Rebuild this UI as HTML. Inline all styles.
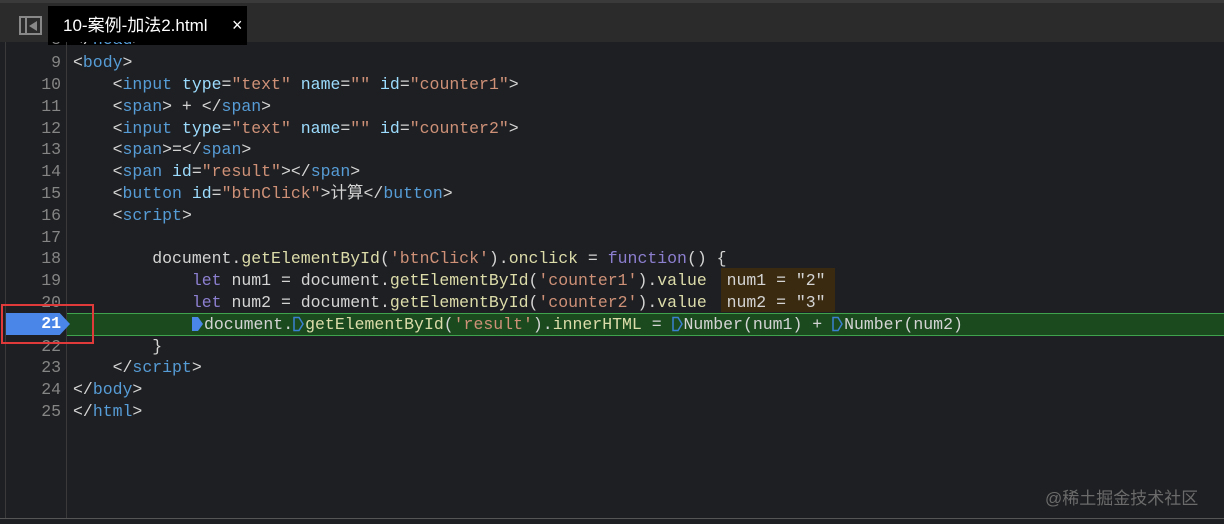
<!DOCTYPE html>
<html><head><meta charset="utf-8"><style>
*{margin:0;padding:0;box-sizing:border-box}
body{width:1224px;height:524px;background:#1e1f22;overflow:hidden;position:relative;font-family:"Liberation Mono","Noto Sans CJK SC",monospace;font-size:16.5px;color:#d4d4d4}
#tabbar{position:absolute;left:0;top:0;width:1224px;height:42px;background:#2b2b2b;border-top:3px solid #3a3a3a}
#tab{position:absolute;left:48px;top:3px;width:199px;height:39px;background:#000;color:#fff;font-family:"Liberation Sans","Noto Sans CJK SC",sans-serif;font-size:17px;line-height:39px;padding-left:15px}
#tab span{position:absolute;left:184px;top:0;font-size:18px}
#icon{position:absolute;left:19px;top:13px;width:23px;height:19px;border:2px solid #888}
#icon:before{content:"";position:absolute;left:4px;top:0;width:2px;height:15px;background:#888}
#icon:after{content:"";position:absolute;left:8px;top:3px;border-right:8px solid #888;border-top:5px solid transparent;border-bottom:5px solid transparent}
#leftstrip{position:absolute;left:5px;top:42px;width:1px;height:476px;background:#3a3a3a}
#gsep{position:absolute;left:66px;top:42px;width:1px;height:476px;background:#3a3a3a}
#code{position:absolute;left:0;top:42px;width:1224px;height:476px;overflow:hidden}
.l{position:absolute;left:0;height:21.8px;line-height:21.8px;white-space:pre;width:1224px}
.n{position:absolute;left:0;width:61px;text-align:right;color:#858585}
.c{position:absolute;left:73px}
.t{color:#569cd6}.a{color:#9cdcfe}.s{color:#ce9178}.f{color:#dcdcaa}.k{color:#8c7fd0}
#hl{position:absolute;left:67px;top:313px;width:1157px;height:23px;background:#1b4a1f;border-top:1px solid #3fa34d;border-bottom:1px solid #3fa34d}
#bp{position:absolute;left:6px;top:313px;width:64px;height:22px;background:#4a86e8;clip-path:polygon(0 0,84% 0,100% 50%,84% 100%,0 100%)}
#red{position:absolute;left:1px;top:304px;width:93px;height:40px;border:2px solid #e03a3a}
#inl{position:absolute;left:721px;top:268px;width:114px;height:44px;background:#3a2a10}
svg.m{display:inline-block;width:11px;height:16px;vertical-align:-3px;margin-right:1px}
#wm{position:absolute;left:1045px;top:484px;font-family:"Liberation Sans","Noto Sans CJK SC",sans-serif;font-size:17px;color:#6b6b6b}
#bot{position:absolute;left:0;top:518px;width:1224px;height:1px;background:#555}
</style></head><body>
<div id="tabbar"><div id="icon"></div><div id="tab">10-案例-加法2.html<span>×</span></div></div>
<div id="hl"></div>
<div id="inl"></div>
<div id="code">
<div class="l" style="top:-12.6px"><span class="n">8</span><span class="c">&lt;/<span class="t">head</span>&gt;</span></div>
<div class="l" style="top:10.2px"><span class="n">9</span><span class="c">&lt;<span class="t">body</span>&gt;</span></div>
<div class="l" style="top:32px"><span class="n">10</span><span class="c">    &lt;<span class="t">input</span> <span class="a">type</span>=<span class="s">"text"</span> <span class="a">name</span>=<span class="s">""</span> <span class="a">id</span>=<span class="s">"counter1"</span>&gt;</span></div>
<div class="l" style="top:53.8px"><span class="n">11</span><span class="c">    &lt;<span class="t">span</span>&gt; + &lt;/<span class="t">span</span>&gt;</span></div>
<div class="l" style="top:75.6px"><span class="n">12</span><span class="c">    &lt;<span class="t">input</span> <span class="a">type</span>=<span class="s">"text"</span> <span class="a">name</span>=<span class="s">""</span> <span class="a">id</span>=<span class="s">"counter2"</span>&gt;</span></div>
<div class="l" style="top:97.4px"><span class="n">13</span><span class="c">    &lt;<span class="t">span</span>&gt;=&lt;/<span class="t">span</span>&gt;</span></div>
<div class="l" style="top:119.2px"><span class="n">14</span><span class="c">    &lt;<span class="t">span</span> <span class="a">id</span>=<span class="s">"result"</span>&gt;&lt;/<span class="t">span</span>&gt;</span></div>
<div class="l" style="top:141px"><span class="n">15</span><span class="c">    &lt;<span class="t">button</span> <span class="a">id</span>=<span class="s">"btnClick"</span>&gt;计算&lt;/<span class="t">button</span>&gt;</span></div>
<div class="l" style="top:162.8px"><span class="n">16</span><span class="c">    &lt;<span class="t">script</span>&gt;</span></div>
<div class="l" style="top:184.6px"><span class="n">17</span></div>
<div class="l" style="top:206.4px"><span class="n">18</span><span class="c">        document.<span class="f">getElementById</span>(<span class="s">'btnClick'</span>).<span class="f">onclick</span> = <span class="k">function</span>() {</span></div>
<div class="l" style="top:228.2px"><span class="n">19</span><span class="c">            <span class="k">let</span> num1 = document.<span class="f">getElementById</span>(<span class="s">'counter1'</span>).<span class="f">value</span>  num1 = "2"</span></div>
<div class="l" style="top:250px"><span class="n">20</span><span class="c">            <span class="k">let</span> num2 = document.<span class="f">getElementById</span>(<span class="s">'counter2'</span>).<span class="f">value</span>  num2 = "3"</span></div>
<div class="l" style="top:271.8px"><span class="c" style="left:192px"><svg class="m" viewBox="0 0 11 16"><path d="M0 1H6L11 8L6 15H0Z" fill="#4a86e8"/></svg>document.<svg class="m" viewBox="0 0 11 16"><path d="M1 1.5H6L10 8L6 14.5H1Z" fill="none" stroke="#3b7fd0" stroke-width="1.5"/></svg><span class="f">getElementById</span>(<span class="s">'result'</span>).<span class="f">innerHTML</span> = <svg class="m" viewBox="0 0 11 16"><path d="M1 1.5H6L10 8L6 14.5H1Z" fill="none" stroke="#3b7fd0" stroke-width="1.5"/></svg>Number(num1) + <svg class="m" viewBox="0 0 11 16"><path d="M1 1.5H6L10 8L6 14.5H1Z" fill="none" stroke="#3b7fd0" stroke-width="1.5"/></svg>Number(num2)</span></div>
<div class="l" style="top:293.6px"><span class="n">22</span><span class="c">        }</span></div>
<div class="l" style="top:315.4px"><span class="n">23</span><span class="c">    &lt;/<span class="t">script</span>&gt;</span></div>
<div class="l" style="top:337.2px"><span class="n">24</span><span class="c">&lt;/<span class="t">body</span>&gt;</span></div>
<div class="l" style="top:359px"><span class="n">25</span><span class="c">&lt;/<span class="t">html</span>&gt;</span></div>
</div>
<div id="leftstrip"></div><div id="gsep"></div>
<div id="bp"></div>
<div style="position:absolute;left:0;top:313px;width:61px;height:22px;line-height:22px;text-align:right;color:#fff;font-weight:bold">21</div>
<div id="red"></div>
<div id="wm">@稀土掘金技术社区</div>
<div id="bot"></div>
</body></html>
